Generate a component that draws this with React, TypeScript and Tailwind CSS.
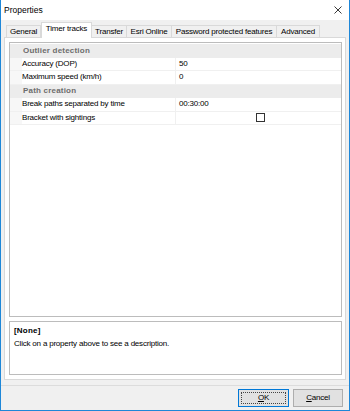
const tabs = [
  { label: 'General', w: 'w-[35px]' },
  { label: 'Timer tracks', w: 'w-[51px]', active: true },
  { label: 'Transfer', w: 'w-[35px]' },
  { label: 'Esri Online', w: 'w-[45px]' },
  { label: 'Password protected features', w: 'w-[105px]' },
  { label: 'Advanced', w: 'w-[43px]' },
]

type Row =
  | { kind: 'cat'; label: string }
  | { kind: 'prop'; label: string; value?: string; check?: boolean }

const rows: Row[] = [
  { kind: 'cat', label: 'Outlier detection' },
  { kind: 'prop', label: 'Accuracy (DOP)', value: '50' },
  { kind: 'prop', label: 'Maximum speed (km/h)', value: '0' },
  { kind: 'cat', label: 'Path creation' },
  { kind: 'prop', label: 'Break paths separated by time', value: '00:30:00' },
  { kind: 'prop', label: 'Bracket with sightings', check: true },
]

export default function App() {
  return (
    <div className="w-[350px] h-[411px] flex flex-col border-x border-b border-[#1e87d8] bg-[#f0f0f0] text-black font-['Liberation_Sans',Arial,sans-serif] text-[8px] tracking-[-0.2px] overflow-hidden">
      {/* Title bar */}
      <div className="h-[20px] shrink-0 bg-white flex items-center justify-between pl-[3px] pr-[7px]">
        <span className="text-[8.5px] tracking-normal">Properties</span>
        <svg width="8" height="8" viewBox="0 0 8 8" className="mr-[0px]">
          <path d="M0.5 0.5 L7.5 7.5 M7.5 0.5 L0.5 7.5" stroke="#222" strokeWidth="0.9" fill="none" />
        </svg>
      </div>

      <div className="flex flex-col px-[3px]">
        {/* Tabs */}
        <div className="h-[17px] flex items-end pl-[2px] relative z-10">
          {tabs.map((t) =>
            t.active ? (
              <div
                key={t.label}
                className={`${t.w} h-[16px] -mb-px bg-white border border-b-0 border-[#d9d9d9] flex items-center justify-center pb-[3px] whitespace-nowrap`}
              >
                {t.label}
              </div>
            ) : (
              <div
                key={t.label}
                className={`${t.w} h-[12px] bg-[#f0f0f0] border border-b-0 border-l-0 first:border-l border-[#d9d9d9] flex items-center justify-center whitespace-nowrap`}
              >
                {t.label}
              </div>
            )
          )}
        </div>

        {/* Tab page */}
        <div className="h-[343px] bg-white border border-[#d9d9d9] pl-[4px] pr-[3px] pt-[4px] flex flex-col">
          {/* Property grid */}
          <div className="h-[275px] border border-[#bcbcbc] pt-px">
            {rows.map((r) =>
              r.kind === 'cat' ? (
                <div
                  key={r.label}
                  className="h-[13.5px] bg-[#ececec] flex items-center pl-[13px] font-bold text-[#6d6d6d] tracking-[0.2px]"
                >
                  {r.label}
                </div>
              ) : (
                <div key={r.label} className="h-[13.5px] flex border-b border-[#f0f0f0]">
                  <div className="w-[12px] shrink-0 bg-[#f7f7f7]" />
                  <div className="w-[154px] shrink-0 border-r border-[#f0f0f0] flex items-center whitespace-nowrap">
                    {r.label}
                  </div>
                  <div className="flex-1 flex items-center pl-[3px]">
                    {r.check ? (
                      <div className="mx-auto w-[9px] h-[9px] border border-[#333] bg-white" />
                    ) : (
                      r.value
                    )}
                  </div>
                </div>
              )
            )}
          </div>

          {/* Description */}
          <div className="mt-[4px] h-[54px] border border-[#bcbcbc] px-[4px] pt-[3px]">
            <div className="font-bold tracking-[0.2px] leading-[12px]">[None]</div>
            <div className="mt-[1px] leading-[12px]">Click on a property above to see a description.</div>
          </div>
        </div>
      </div>

      {/* Separator + buttons */}
      <div className="mt-[5px] h-px bg-[#dcdcdc]" />
      <div className="flex justify-end gap-[4px] pr-[6px] mt-[3px]">
        <button className="w-[51px] h-[18px] border border-[#0078d7] bg-[#e1e1e1] p-[2px]">
          <div className="w-full h-full border border-dotted border-[#444] flex items-center justify-center">
            <span>
              <span className="underline">O</span>K
            </span>
          </div>
        </button>
        <button className="w-[50px] h-[18px] border border-[#adadad] bg-[#e1e1e1] flex items-center justify-center">
          <span>
            <span className="underline">C</span>ancel
          </span>
        </button>
      </div>
    </div>
  )
}
